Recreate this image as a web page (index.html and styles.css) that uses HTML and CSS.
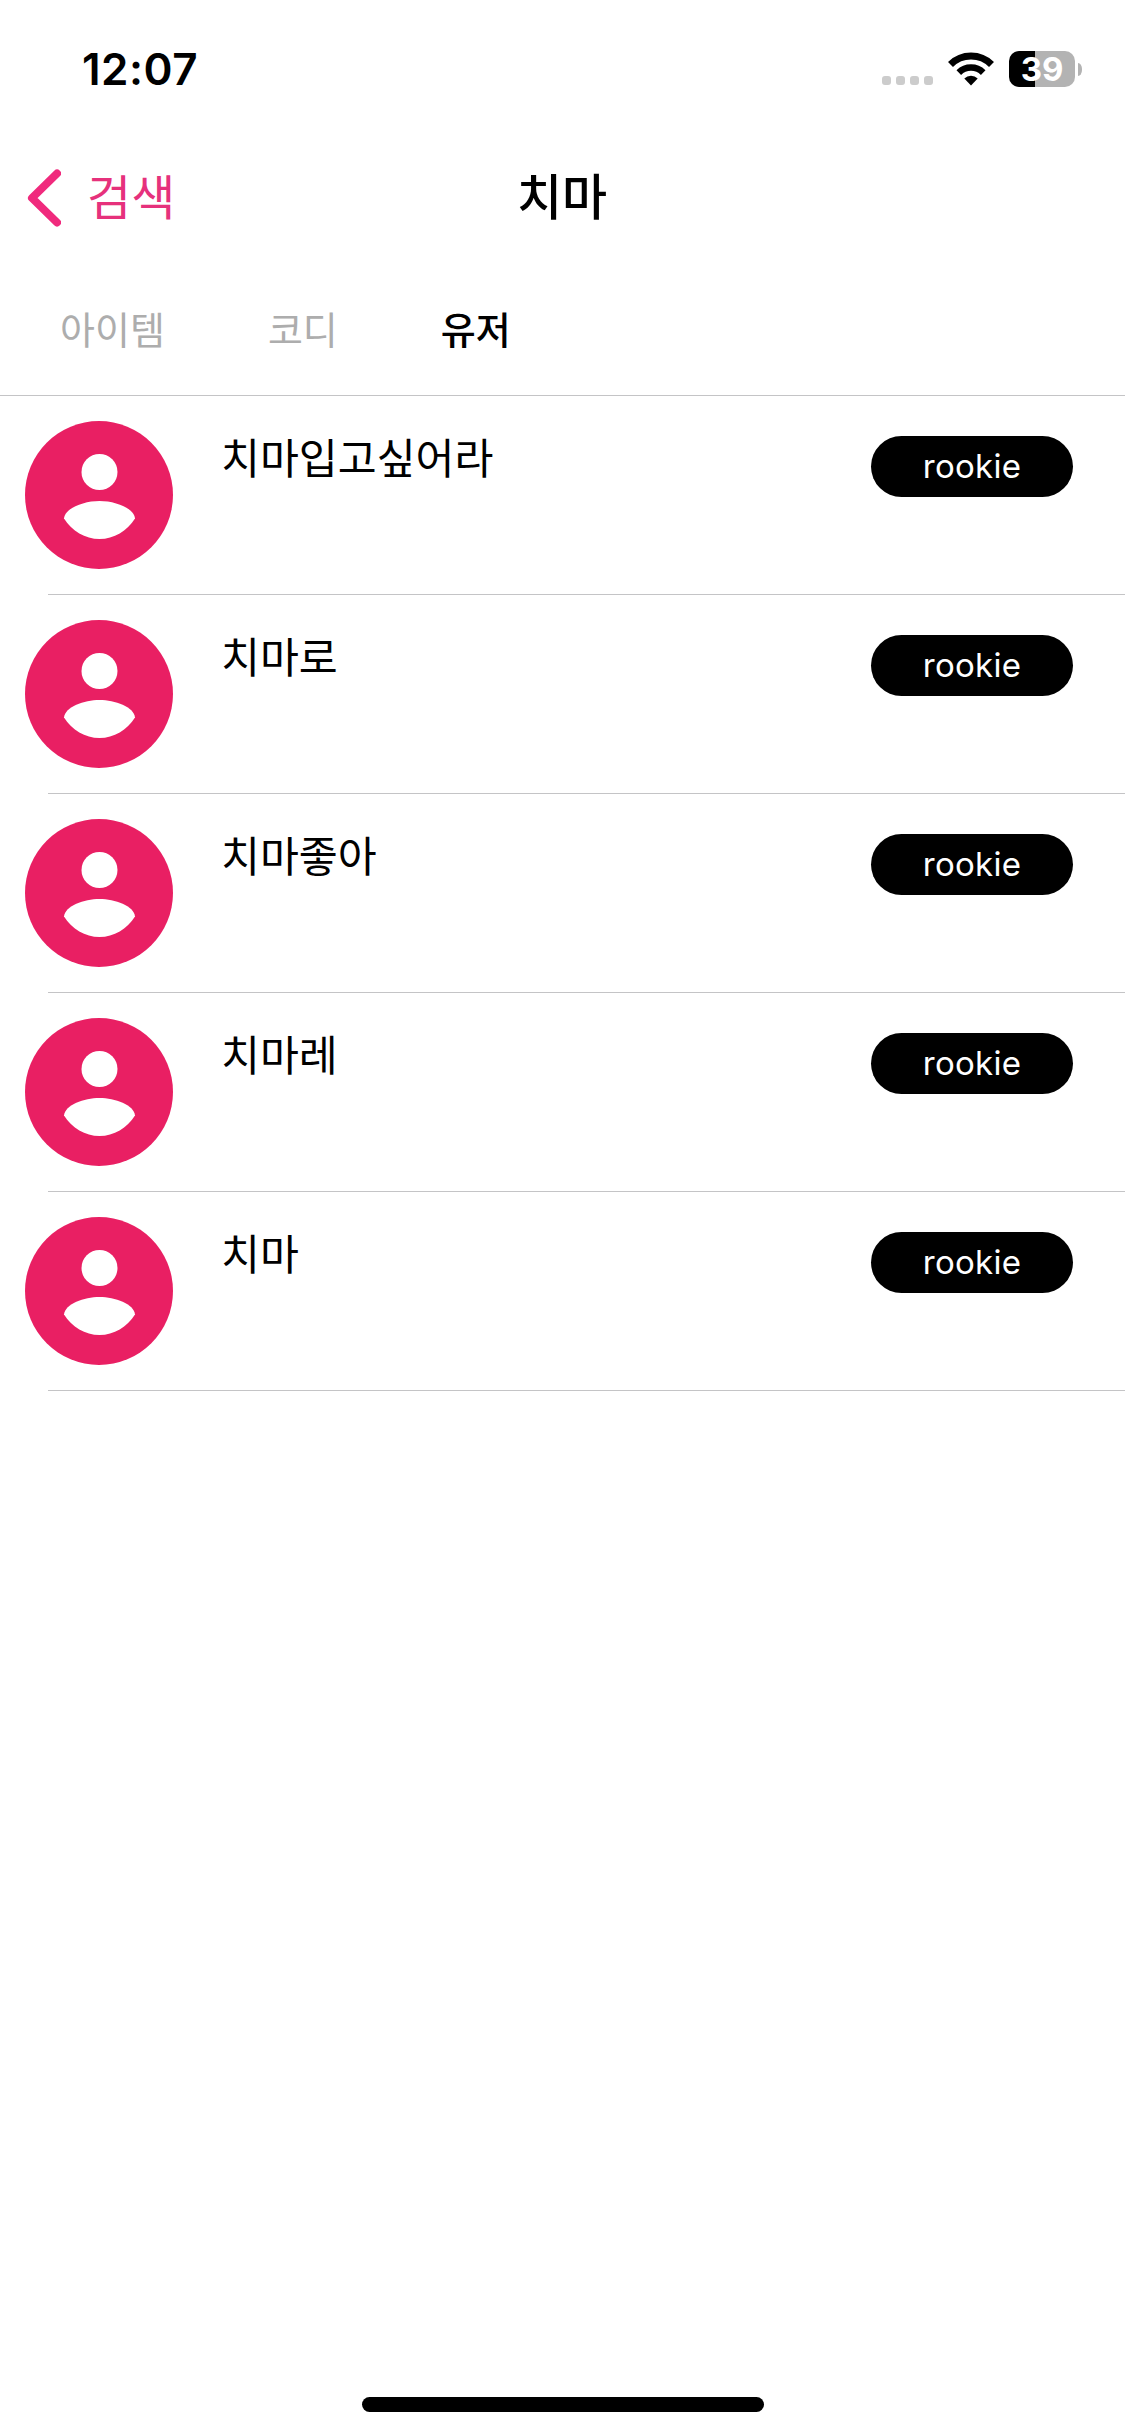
FILE: index.html
```html
<!DOCTYPE html>
<html lang="ko">
<head>
<meta charset="utf-8">
<title>치마</title>
<link rel="stylesheet" href="styles.css">
</head>
<body>
<svg class="defs" width="0" height="0" aria-hidden="true">
  <symbol id="avatar" viewBox="0 0 148 148">
    <circle cx="74" cy="74" r="74" fill="#e91f63"/>
    <circle cx="74.500" cy="51" r="18" fill="#fff"/>
    <path fill="#fff" d="M39 97.500C40 87 59 80 74.500 80S109 87 110 97.500C102 110 89 118 74.500 118S47 110 39 97.500Z"/>
  </symbol>
</svg>
<div class="screen">
  <header class="status">
    <span class="time">12:07</span>
    <div class="indicators">
      <div class="signal"><i></i><i></i><i></i><i></i></div>
      <svg class="wifi" width="46" height="34" viewBox="0 0 46 34">
        <g fill="none" stroke="#000">
          <path stroke-width="7" d="M2.500 12.500A29 29 0 0 1 43.500 12.500"/>
          <path stroke-width="6.500" d="M10.800 20.600A17.300 17.300 0 0 1 35.200 20.600"/>
        </g>
        <path d="M23 33.500L16.300 26.600A9.500 9.500 0 0 1 29.700 26.600Z"/>
      </svg>
      <div class="battery">39</div>
      <div class="nub"></div>
    </div>
  </header>
  <nav class="navbar">
    <a class="back">
      <svg width="34" height="58" viewBox="0 0 34 58"><path d="M30 4.500L5 29L30 53.500" fill="none" stroke="#f02a7d" stroke-width="8" stroke-linecap="round" stroke-linejoin="round"/></svg>
      <span>검색</span>
    </a>
    <h1>치마</h1>
  </nav>
  <div class="tabs">
    <span class="tab">아이템</span>
    <span class="tab">코디</span>
    <span class="tab active">유저</span>
  </div>
  <ul class="users">
    <li><svg class="avatar"><use href="#avatar"/></svg><div class="name">치마입고싶어라</div><div class="badge">rookie</div></li>
    <li><svg class="avatar"><use href="#avatar"/></svg><div class="name">치마로</div><div class="badge">rookie</div></li>
    <li><svg class="avatar"><use href="#avatar"/></svg><div class="name">치마좋아</div><div class="badge">rookie</div></li>
    <li><svg class="avatar"><use href="#avatar"/></svg><div class="name">치마레</div><div class="badge">rookie</div></li>
    <li><svg class="avatar"><use href="#avatar"/></svg><div class="name">치마</div><div class="badge">rookie</div></li>
  </ul>
  <div class="home"></div>
</div>
</body>
</html>
```
FILE: styles.css
```css
* { box-sizing: border-box; }
body { margin: 0; background: #fff; color: #000; font-family: Inter, "Noto Sans CJK KR", sans-serif; }
.defs { display: block; }
.screen { width: 1125px; height: 2436px; display: flex; flex-direction: column; background: #fff; }

.status { height: 138px; display: flex; justify-content: space-between; align-items: center; padding: 0 43px 0 82px; }
.time { font-size: 44px; font-weight: 600; line-height: 50px; letter-spacing: .5px; }
.indicators { display: flex; align-items: center; }
.signal { display: flex; gap: 5px; margin: 23px 15px 0 0; }
.signal i { width: 9px; height: 9px; border-radius: 3px; background: #ccc; }
.battery { width: 66px; height: 36px; margin-left: 15px; border-radius: 10px; background: linear-gradient(90deg, #000 26px, #b3b3b3 26px); color: #fff; font-size: 33px; font-weight: 700; line-height: 36px; text-align: center; }
.nub { width: 4px; height: 13px; margin-left: 3px; border-radius: 0 4px 4px 0 / 0 6px 6px 0; background: #b3b3b3; }

.navbar { height: 120px; display: grid; grid-template-columns: 1fr auto 1fr; align-items: center; padding: 0 27px; }
.back { display: flex; align-items: center; gap: 26px; color: #e6317c; font-size: 48px; line-height: 60px; }
.navbar h1 { margin: 0 1px 0 0; font-size: 49px; line-height: 60px; font-weight: 500; }

.tabs { height: 138px; display: flex; align-items: center; gap: 103px; padding: 6px 60px 0; border-bottom: 1px solid #c4c4c6; font-size: 38px; line-height: 50px; color: #adadad; }
.tab.active { color: #000; font-weight: 500; }

.users { margin: 0; padding: 0; list-style: none; flex: 1; }
.users li { height: 199px; display: flex; align-items: flex-start; padding: 25px 52px 0 25px; background: linear-gradient(#c4c4c6, #c4c4c6) 48px 100% / 100% 1px no-repeat; }
.avatar { width: 148px; height: 148px; flex: none; }
.name { flex: 1; margin: 8px 0 0 48px; font-size: 42.300px; line-height: 60px; }
.badge { width: 202px; height: 61px; margin-top: 15px; border-radius: 31px; background: #000; color: #fff; font-size: 33px; line-height: 61px; text-align: center; letter-spacing: .3px; }

.home { width: 402px; height: 15px; margin: 0 auto 24px; border-radius: 8px; background: #000; }
```
